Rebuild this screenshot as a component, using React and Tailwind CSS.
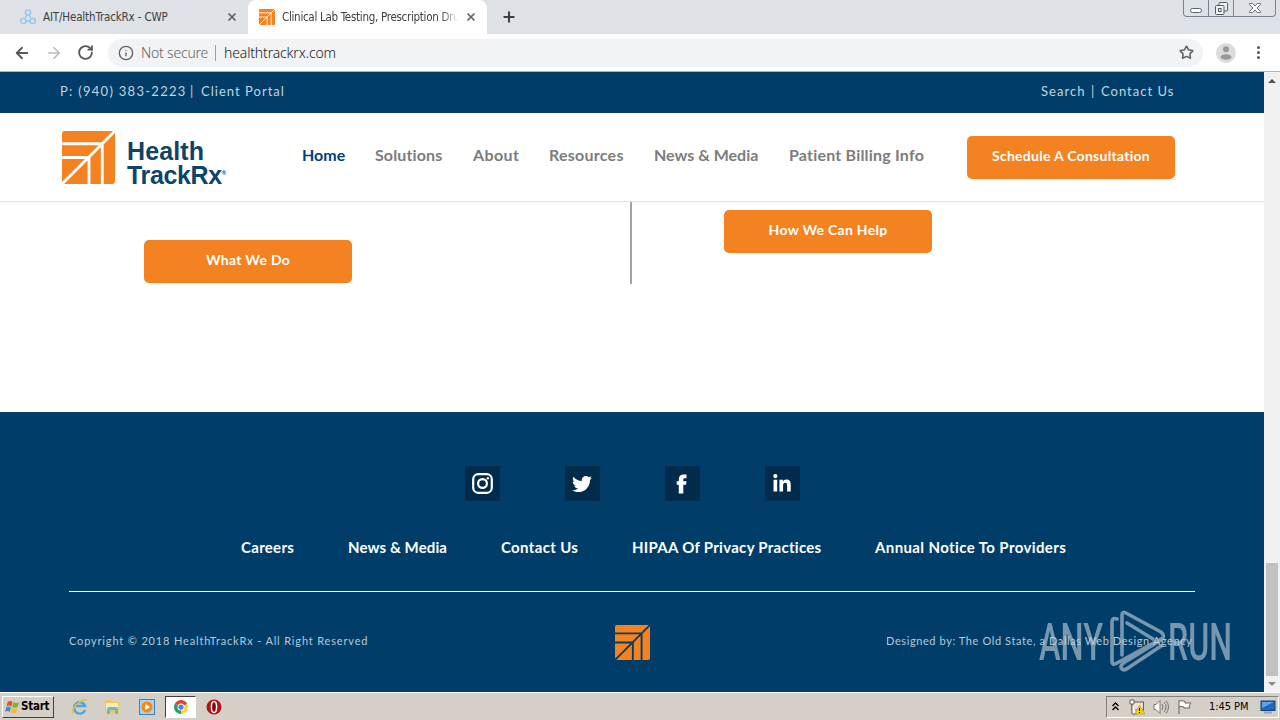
import { FaTwitter, FaLinkedinIn } from "react-icons/fa";
import { ArrowLeft, ArrowRight, RotateCw, Info, Star, Plus, X } from "lucide-react";

const navItems = [
  { name: "Home", box: "w-[43px] text-[#003e7e]" },
  { name: "Solutions", box: "w-[68px] text-[#7c7c7c] tracking-[0.12px]" },
  { name: "About", box: "w-[46px] text-[#7c7c7c] tracking-[0.4px]" },
  { name: "Resources", box: "w-[75px] text-[#7c7c7c] tracking-[0.25px]" },
  { name: "News & Media", box: "w-[105px] text-[#7c7c7c]" },
  { name: "Patient Billing Info", box: "w-[136px] text-[#7c7c7c] tracking-[0.2px]" },
];

const footerLinks = [
  { name: "Careers", box: "w-[53px] tracking-[0.3px]" },
  { name: "News & Media", box: "w-[99px] tracking-[0.1px]" },
  { name: "Contact Us", box: "w-[77px] tracking-[0.35px]" },
  { name: "HIPAA Of Privacy Practices", box: "w-[189px] tracking-[0.28px]" },
  { name: "Annual Notice To Providers", box: "w-[191px] tracking-[0.39px]" },
];

const socials = [
  { name: "Instagram", Icon: InstagramIcon, size: 21 },
  { name: "Twitter", Icon: FaTwitter, size: 20 },
  { name: "Facebook", Icon: FacebookIcon, size: 20 },
  { name: "LinkedIn", Icon: FaLinkedinIn, size: 20 },
];

function InstagramIcon({ size }) {
  return (
    <svg viewBox="0 0 21 21" width={size} height={size} fill="none" stroke="#fff" strokeWidth="2.2">
      <rect x="1.2" y="1.2" width="18.6" height="18.6" rx="5" />
      <circle cx="10.5" cy="10.5" r="4.4" />
      <circle cx="15.9" cy="5.2" r="1.2" fill="#fff" stroke="none" />
    </svg>
  );
}

function FacebookIcon({ size }) {
  return (
    <svg viewBox="0 0 20 20" width={size} height={size} fill="#fff">
      <path d="M6.8 19.5V10.800H4.700V7.200h2.100V5.200C6.800 2.200 8.600.5 11.600.5h2.900v3.700h-1.600c-1.200 0-1.600.5-1.600 1.500v1.500h3.200l-.4 3.600h-2.800v8.700z" />
    </svg>
  );
}

function Mark({ className, line = "#fff" }) {
  return (
    <svg viewBox="0 0 52 52" className={className}>
      <rect width="52" height="52" rx="3" fill="#f58220" />
      <path
        d="M0 52L52 0M0 12.5H39.5V52M0 26H26.5V52"
        fill="none"
        stroke={line}
        strokeWidth="2.8"
      />
    </svg>
  );
}

function TabStrip() {
  return (
    <div className="flex h-[34px] bg-[#dee1e6] text-[#3c4043] font-['DejaVu_Sans_Condensed','DejaVu_Sans',sans-serif]">
      <div className="flex w-[248px] items-center pl-5 pr-[10px]">
        <svg viewBox="0 0 16 16" className="size-4" fill="none" stroke="#91c8e8" strokeWidth="1.4">
          <circle cx="8" cy="3.5" r="2.6" />
          <circle cx="3.3" cy="12" r="2.6" />
          <circle cx="12.7" cy="12" r="2.6" />
          <path d="M7 6L5 9.5M9 6l2 3.5M6 12h4" />
        </svg>
        <span className="ml-[7px] mt-px flex-1 whitespace-nowrap text-[11.5px] tracking-[-0.15px]">
          AIT/HealthTrackRx - CWP
        </span>
        <X className="size-3" strokeWidth={3.5} color="#5f6368" />
      </div>
      <div className="flex w-[239px] items-center rounded-t-lg bg-white pl-[11px] pr-[10px]">
        <Mark className="size-4" />
        <span className="ml-[7px] mt-px w-[177px] whitespace-nowrap text-[11.5px] tracking-[-0.29px] [mask-image:linear-gradient(to_right,#000_90%,transparent)]">
          Clinical Lab Testing, Prescription Dru
        </span>
        <X className="ml-[6px] size-3 shrink-0" strokeWidth={3.5} color="#5f6368" />
      </div>
      <Plus className="ml-[14px] mt-[9px] size-4" strokeWidth={3} color="#3c4043" />
      <div className="ml-auto mr-1 flex h-[17px] w-[93px] rounded-b border border-t-0 border-[#7c828d] text-[#555b65]">
        <div className="flex w-[25px] justify-center border-r border-[#7c828d] pt-[8px]">
          <span className="h-[5px] w-3 rounded-sm border border-[#5b616b] bg-white" />
        </div>
        <div className="flex w-[25px] justify-center border-r border-[#7c828d] pt-[2px]">
          <svg viewBox="0 0 13 13" className="size-[13px]" fill="#eef0f3" stroke="#555b65">
            <rect x="4" y="0.5" width="8.5" height="8.5" rx="1" />
            <rect x="0.5" y="3.5" width="8.5" height="9" rx="1" />
            <rect x="3.5" y="6.5" width="2.5" height="3" />
          </svg>
        </div>
        <div className="flex flex-1 justify-center pt-[3px]">
          <svg viewBox="0 0 12 10" className="h-[10px] w-3" fill="#fff" stroke="#666c76">
            <path d="M.5.5h3.2L6 3 8.3.5h3.2v1L8 5l3.5 3.5v1H8.3L6 7 3.7 9.5H.5v-1L4 5 .5 1.5z" />
          </svg>
        </div>
      </div>
    </div>
  );
}

function Toolbar() {
  return (
    <div className="flex h-[38px] items-center border-b border-[#a9b5be] bg-white pl-[13px] font-['Noto_Sans',sans-serif]">
      <ArrowLeft className="size-[18px]" strokeWidth={2.4} color="#55585c" />
      <ArrowRight className="ml-[14px] size-[18px]" strokeWidth={2.2} color="#b9bbbe" />
      <RotateCw className="ml-[14px] size-[17px]" strokeWidth={2.6} color="#55585c" />
      <div className="ml-[14px] flex h-7 w-[1095px] items-center rounded-full bg-[#f1f3f4] pl-[10px] text-[14px]">
        <Info className="size-4" color="#5f6368" />
        <span className="ml-[7px] w-[68px] whitespace-nowrap font-light tracking-[-0.2px] text-[#5f6368]">
          Not secure
        </span>
        <span className="ml-[6px] h-4 w-px bg-[#9aa0a6]" />
        <span className="ml-[8px] whitespace-nowrap font-light tracking-[-0.15px] text-[#202124]">
          healthtrackrx.com
        </span>
        <Star className="ml-auto mr-[9px] size-[15px]" strokeWidth={2.5} color="#5f6368" />
      </div>
      <svg viewBox="0 0 20 20" className="ml-[13px] size-5">
        <circle cx="10" cy="10" r="10" fill="#dcdcdc" />
        <circle cx="10" cy="6.3" r="3" fill="#999" />
        <ellipse cx="10" cy="14" rx="5.5" ry="2.8" fill="#999" />
      </svg>
      <div className="ml-[21px] flex flex-col gap-[2px]">
        <span className="size-[3px] rounded-full bg-[#55585c]" />
        <span className="size-[3px] rounded-full bg-[#55585c]" />
        <span className="size-[3px] rounded-full bg-[#55585c]" />
      </div>
    </div>
  );
}

function Header() {
  return (
    <header>
      <div className="flex h-[41px] items-center bg-[#003e69] pb-[2px] pl-[60px] pr-[89px] text-[13px] text-[#c3d3df]">
        <span className="w-[130px] whitespace-nowrap tracking-[1.28px]">P: (940) 383-2223</span>
        <span className="w-[11px]">|</span>
        <span className="whitespace-nowrap tracking-[1.02px]">Client Portal</span>
        <span className="ml-auto w-[50px] whitespace-nowrap tracking-[1.05px]">Search</span>
        <span className="w-[10px]">|</span>
        <span className="w-[74px] whitespace-nowrap tracking-[1px]">Contact Us</span>
      </div>
      <div className="flex h-[89px] items-start border-b border-[#e3e3e3] bg-white pl-[62px] pr-[89px]">
        <Mark className="mt-[18px] size-[53px]" />
        <div className="ml-[12px] mt-[26px] w-[175px] text-[25px] font-bold leading-[24px] text-[#0f4468] font-['Liberation_Sans',sans-serif]">
          <div className="tracking-[0.1px]">Health</div>
          <div className="flex tracking-[-0.35px]">
            TrackRx<span className="mt-[7px] text-[6px] leading-[7px]">®</span>
          </div>
        </div>
        <nav className="mt-[30px] flex gap-[30px] text-[16px] font-bold leading-6">
          {navItems.map((item) => (
            <a key={item.name} className={`whitespace-nowrap ${item.box}`}>
              {item.name}
            </a>
          ))}
        </nav>
        <OrangeButton className="ml-auto mt-[23px]">Schedule A Consultation</OrangeButton>
      </div>
    </header>
  );
}

function OrangeButton({ className, children }) {
  return (
    <button
      className={`flex h-[43px] w-[208px] items-center justify-center whitespace-nowrap rounded-[5px] bg-[#f58220] pb-[4px] text-[14px] font-bold tracking-[0.28px] text-white ${className}`}
    >
      {children}
    </button>
  );
}

function Footer() {
  return (
    <footer className="flex-1 bg-[#003e69] text-white">
      <div className="flex justify-center gap-[65px] pt-[54px]">
        {socials.map(({ name, Icon, size }) => (
          <a
            key={name}
            aria-label={name}
            className="flex size-[35px] items-center justify-center rounded-[2px] bg-[#012b4b]"
          >
            <Icon size={size} />
          </a>
        ))}
      </div>
      <nav className="ml-[241px] mt-[34px] flex gap-[54px] text-[15px] font-bold leading-6">
        {footerLinks.map((link) => (
          <a key={link.name} className={`whitespace-nowrap ${link.box}`}>
            {link.name}
          </a>
        ))}
      </nav>
      <div className="ml-[69px] mt-[32px] flex w-[1126px] items-start border-t border-white text-[11px] text-[#b6cad8]">
        <span className="mt-[41px] w-[546px] whitespace-nowrap tracking-[0.84px]">
          Copyright © 2018 HealthTrackRx - All Right Reserved
        </span>
        <Mark className="mt-[33px] size-[35px]" line="#003e69" />
        <span className="ml-auto mt-[41px] w-[309px] whitespace-nowrap tracking-[0.6px]">
          Designed by: The Old State, a Dallas Web Design Agency
        </span>
      </div>
    </footer>
  );
}

function Scrollbar() {
  return (
    <div className="flex w-4 flex-col items-center bg-[#f1f1f1]">
      <span className="mt-[7px] border-x-4 border-b-4 border-x-transparent border-b-[#505050]" />
      <span className="mt-auto h-[113px] w-3 bg-[#c1c1c1]" />
      <span className="mb-[6px] mt-[6px] border-x-4 border-t-4 border-x-transparent border-t-[#8b8b8b]" />
    </div>
  );
}

function Watermark() {
  return (
    <svg
      viewBox="0 0 196 66"
      className="absolute bottom-[17px] right-[47px] h-[66px] w-[196px] overflow-visible font-['Roboto',sans-serif] opacity-60"
    >
      <g fill="#c5d2db" fontSize="52" fontWeight="500">
        <text x="2" y="51" textLength="64" lengthAdjust="spacingAndGlyphs">
          ANY
        </text>
        <text x="131" y="51" textLength="64" lengthAdjust="spacingAndGlyphs">
          RUN
        </text>
      </g>
      <g fill="none" stroke="#c5d2db" strokeWidth="3.6" strokeLinejoin="round" strokeLinecap="round">
        <path d="M80 10Q75 8 75 13V52Q75 57 80 54L124 30" />
        <path d="M85 46V6Q85 2 89 4L124 23Q129 27 124 31L88 53Q82 57 85 60Q87 62 91 59L124 37" />
        <path d="M90 14L116 30" />
      </g>
    </svg>
  );
}

function Taskbar() {
  return (
    <div className="flex h-7 items-center border-t border-white bg-[#d4d0c8] font-['DejaVu_Sans_Condensed','DejaVu_Sans',sans-serif] text-black">
      <button className="ml-[2px] flex h-[22px] w-[52px] items-center border border-b-[#404040] border-l-white border-r-[#404040] border-t-white pl-[2px] text-[11.5px] font-bold tracking-[-0.25px]">
        <svg viewBox="0 0 16 16" className="mr-px size-[15px]">
          <path d="M3 3q3-2 5 0L7 8Q4 6 1.5 8z" fill="#e75128" />
          <path d="M9 3.5q3 1.5 6 0L13.5 8.5q-3 1.5-6 0z" fill="#7bb52d" />
          <path d="M1.3 9q2.5-2 5 0L5 14Q3 12 0 13.5z" fill="#3e8ed0" />
          <path d="M7.3 9.5q3 1.5 6 0L12 14.5q-3 1.5-6 0z" fill="#f5bc28" />
        </svg>
        <span className="mt-px">Start</span>
      </button>
      <svg viewBox="0 0 18 18" className="ml-[17px] size-[17px]" fill="none">
        <path d="M15 12.5A6 6 0 1 1 15 8.5H5" stroke="#4ba9e0" strokeWidth="2.6" />
        <path d="M2 16.5C-1 12 12-1 17 2.5" stroke="#e7bd43" strokeWidth="1.6" />
      </svg>
      <svg viewBox="0 0 17 17" className="ml-4 size-[17px]">
        <path d="M1 2h6l1 2h7v11H1z" fill="#e8c862" />
        <path d="M2 5h12v7H2z" fill="#fbeeb0" />
        <path d="M3 16v-5q0-2 2-2h7q2 0 2 2v5h-3v-4H6v4z" fill="#6bb6de" />
      </svg>
      <svg viewBox="0 0 16 16" className="ml-[18px] size-4">
        <rect x=".5" y=".5" width="15" height="15" fill="#a8d2ee" stroke="#3b83b9" />
        <circle cx="8" cy="8" r="5.5" fill="#f28b16" />
        <path d="M6.3 5v6L11 8z" fill="#fff" />
      </svg>
      <div className="ml-[10px] flex h-[22px] w-[31px] items-center justify-center border border-b-white border-l-[#404040] border-r-white border-t-[#404040] bg-white">
        <svg viewBox="0 0 16 16" className="size-[14px]">
          <path d="M8 8L1.1 4A8 8 0 0 1 14.9 4z" fill="#e34133" />
          <path d="M8 8L1.1 4A8 8 0 0 0 8 16z" fill="#23a455" />
          <path d="M8 8L14.9 4A8 8 0 0 1 8 16z" fill="#fdd23c" />
          <path d="M1.1 4h13.8L8 8z" fill="#e34133" />
          <circle cx="8" cy="8" r="4" fill="#fff" />
          <circle cx="8" cy="8" r="3" fill="#4285f4" />
        </svg>
      </div>
      <svg viewBox="0 0 16 16" className="ml-[10px] size-4">
        <circle cx="8" cy="8" r="7.5" fill="#b51016" />
        <ellipse cx="8" cy="8" rx="2.6" ry="5.5" fill="#7d080c" stroke="#fff" strokeWidth="1.5" />
      </svg>
      <div className="ml-auto mr-px flex h-[22px] w-[173px] items-center border border-b-white border-l-[#808080] border-r-white border-t-[#808080] pl-[5px]">
        <svg viewBox="0 0 7 9" className="h-[9px] w-[7px]" fill="none" stroke="#000" strokeWidth="1.4">
          <path d="M.5 4l3-3 3 3M.5 8l3-3 3 3" />
        </svg>
        <svg viewBox="0 0 16 16" className="ml-[10px] size-4">
          <rect x="3" y="3" width="11.5" height="8" fill="#e8e5df" stroke="#62605b" />
          <path d="M1 1h4v4H1zM3 5v10h5" fill="#fff" stroke="#62605b" />
          <path d="M10.5 6L16 15H5.5z" fill="#f5cf16" stroke="#b99700" strokeWidth=".6" />
          <path d="M10.5 9v3M10.5 13v1" stroke="#000" />
        </svg>
        <svg viewBox="0 0 17 16" className="ml-2 h-4 w-[17px]" fill="none" stroke="#77746e">
          <path d="M1 5.5h2l4-4v13l-4-4H1z" fill="#fff" />
          <path d="M9 5q2 3 0 6M11 3q4 5 0 10M13 1.5q5 6.5 0 13" />
        </svg>
        <svg viewBox="0 0 16 16" className="ml-[7px] size-4" fill="#fff" stroke="#66635e">
          <path d="M2 15V1.5M2 2q3-1 6 .5v1.5h6L12 7l1 2H7V8Q4 7 2 8" />
        </svg>
        <span className="ml-4 mt-px w-[41px] whitespace-nowrap text-[11px] tracking-[-0.05px]">1:45 PM</span>
        <svg viewBox="0 0 16 14" className="ml-[10px] h-[14px] w-4">
          <rect x="1" y="1" width="14" height="9.5" fill="#1e68c4" stroke="#173f75" />
          <path d="M2 2h12L2 8z" fill="#5ca3eb" />
          <path d="M4 12.5h8" stroke="#8ea4bd" strokeWidth="2" />
        </svg>
      </div>
    </div>
  );
}

export default function App() {
  return (
    <div className="flex h-screen w-[1280px] flex-col overflow-hidden bg-white">
      <TabStrip />
      <Toolbar />
      <div className="relative flex h-[620px] font-['Lato',sans-serif]">
        <div className="flex w-[1264px] flex-col">
          <Header />
          <main className="flex h-[210px] items-start">
            <OrangeButton className="ml-[144px] mt-[38px]">What We Do</OrangeButton>
            <span className="ml-[278px] h-[82px] w-[2px] bg-[#a3a3a3]" />
            <OrangeButton className="ml-[92px] mt-2">How We Can Help</OrangeButton>
          </main>
          <Footer />
        </div>
        <Scrollbar />
        <Watermark />
      </div>
      <Taskbar />
    </div>
  );
}
